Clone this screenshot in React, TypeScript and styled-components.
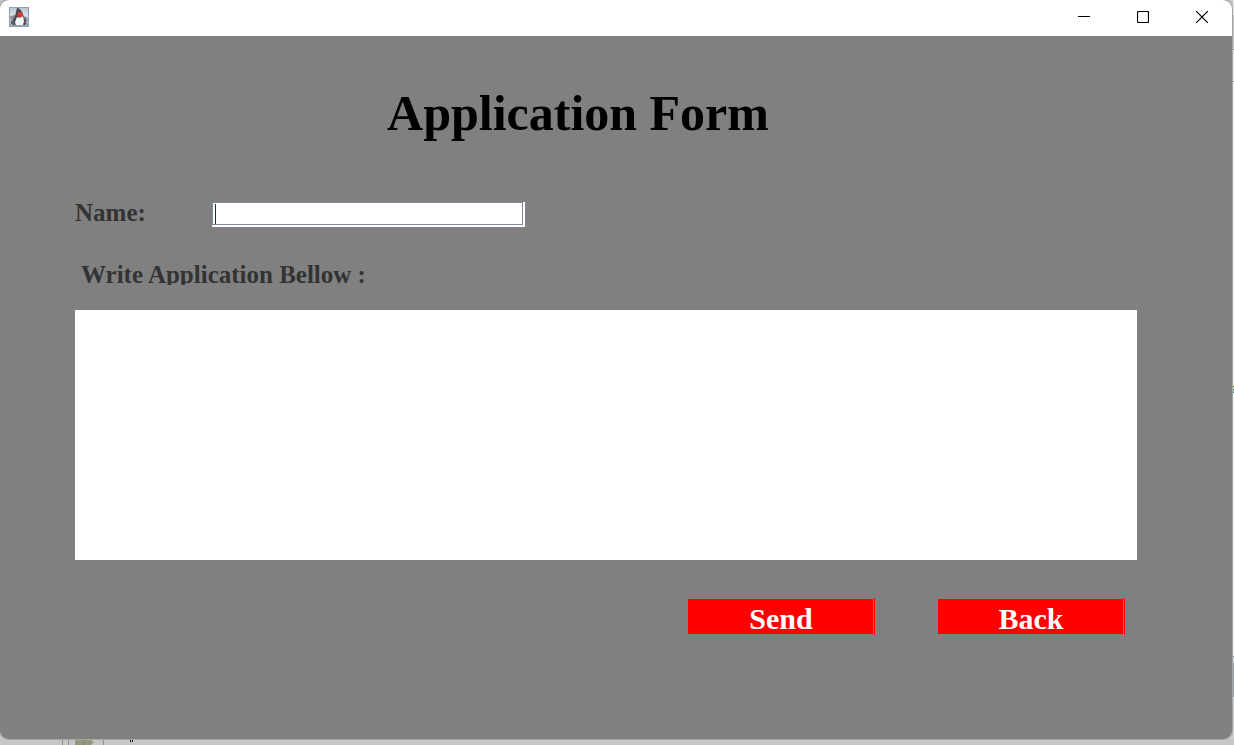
import React from "react";
import styled, { createGlobalStyle } from "styled-components";

const GlobalStyle = createGlobalStyle`
  * { box-sizing: border-box; }
  body { margin: 0; background: #c6c6c6; font-family: "Liberation Serif", "Times New Roman", serif; }
`;

const Desktop = styled.div`
  display: grid;
  grid-template-columns: minmax(0, 1fr) 2px;
  grid-template-rows: 1fr 6px;
  min-height: 100vh;
  background: #c6c6c6;
`;

const Window = styled.main`
  display: flex;
  flex-direction: column;
  background: #808080;
  border-radius: 9px;
  box-shadow: 0 0 0 1px #a6a6a6;
  overflow: hidden;
`;

const TitleBar = styled.header`
  display: flex;
  align-items: center;
  justify-content: space-between;
  height: 36px;
  padding: 0 1px 0 9px;
  background: #ffffff;
`;

const AppIcon = styled.svg`
  display: block;
  margin-bottom: 2px;
`;

const WindowControls = styled.div`
  display: flex;
  height: 36px;
`;

const ControlButton = styled.button`
  display: flex;
  align-items: center;
  justify-content: center;
  width: 59px;
  padding: 0 0 2px;
  border: 0;
  background: transparent;
`;

const Form = styled.form`
  display: flex;
  flex-direction: column;
  padding: 48px 95px 60px 75px;
`;

const Title = styled.h1`
  margin: 0 56px 0 0;
  font-size: 50px;
  line-height: 58px;
  font-weight: 700;
  color: #000000;
  text-align: center;
`;

const NameRow = styled.div`
  display: flex;
  align-items: center;
  height: 30px;
  margin-top: 56px;
`;

const Label = styled.label`
  flex: none;
  font-size: 25px;
  line-height: 30px;
  font-weight: 700;
  color: #333333;
`;

const NameLabel = styled(Label)`
  width: 137px;
`;

const ClippedLabel = styled(Label)`
  height: 25px;
  margin-top: 32px;
  padding-left: 6px;
  overflow: hidden;
`;

const NameField = styled.div`
  position: relative;
  display: flex;
  width: 313px;
  height: 25px;
  margin-top: 3px;
  padding: 0 2px 2px 0;
  background: #ffffff;
`;

const NameInput = styled.input`
  width: 100%;
  padding: 0 2px;
  border: 1px solid #7a8a99;
  border-radius: 0;
  outline: none;
  background: #ffffff;
  font: 16px "Liberation Serif", serif;
`;

const Caret = styled.span`
  position: absolute;
  top: 2px;
  left: 3px;
  width: 1px;
  height: 20px;
  background: #1e2a2f;
`;

const ApplicationText = styled.textarea`
  display: block;
  width: 100%;
  height: 250px;
  margin-top: 25px;
  padding: 2px;
  border: 0;
  border-radius: 0;
  outline: none;
  resize: none;
  background: #ffffff;
  font: 16px "Liberation Serif", serif;
`;

const Actions = styled.div`
  display: flex;
  justify-content: flex-end;
  gap: 63px;
  margin: 38px 12px 0 0;
`;

const ActionButton = styled.button`
  display: flex;
  width: 187px;
  height: 37px;
  padding: 1px 1px 1px 0;
  border: 0;
  border-right: 1px solid #ff0000;
  background: #808080;
  color: #ffffff;
  font: 700 30px "Liberation Serif", "Times New Roman", serif;
`;

const ActionFace = styled.span`
  flex: 1;
  height: 35px;
  padding-left: 1px;
  line-height: 40px;
  background: #ff0000;
`;

const SideSliver = styled.div`
  display: flex;
  flex-direction: column;
  align-items: flex-end;
`;

const Strip = styled.i<{ $h?: number; $color: string }>`
  flex: ${(p) => (p.$h ? "none" : "1")};
  width: 1px;
  height: ${(p) => (p.$h ? p.$h + "px" : "auto")};
  background: ${(p) => p.$color};
`;

const BottomSliver = styled.div`
  grid-column: 1 / -1;
  padding-top: 1px;
`;

const Sliver = styled.svg`
  display: block;
`;

const sideStrips: { h?: number; color: string }[] = [
  { h: 15, color: "#e6e6e6" },
  { h: 34, color: "#c6c6c6" },
  { h: 1, color: "#a0a0a0" },
  { h: 31, color: "#e6e6e6" },
  { h: 1, color: "#a0a0a0" },
  { h: 304, color: "#eeeeee" },
  { h: 1, color: "#2f7d32" },
  { h: 2, color: "#d9e2d6" },
  { h: 1, color: "#2f7d32" },
  { h: 2, color: "#8fc9c4" },
  { h: 1, color: "#2f7d32" },
  { h: 263, color: "#eeeeee" },
  { h: 1, color: "#8c8c8c" },
  { h: 6, color: "#d6d6d6" },
  { h: 34, color: "#929aa3" },
  { color: "#d0d0d0" },
];

export default function App() {
  return (
    <>
      <GlobalStyle />
      <Desktop>
        <Window>
          <TitleBar>
            <AppIcon width="20" height="20" viewBox="0 0 20 20" aria-hidden="true">
              <defs>
                <linearGradient id="tile" x1="0" y1="0" x2="0" y2="1">
                  <stop offset="0" stopColor="#b4c6da" />
                  <stop offset="0.5" stopColor="#e2e7ec" />
                  <stop offset="1" stopColor="#8d9cb0" />
                </linearGradient>
              </defs>
              <rect x="0.5" y="0.5" width="19" height="19" fill="url(#tile)" stroke="#8fa0b5" />
              <path d="M1 9l5-1 1 5-5 1zM14 9l4 1 1 4-4 1z" fill="#8b9197" />
              <path d="M8 1c2 0 4 2 5 4l2 5 2 4-1 4H5l-2-1 1-4 2-4z" fill="#46494e" />
              <path d="M2 14l4 1 1 3-5-1zM15 14l3 2-2 2z" fill="#5a5d62" />
              <path d="M8 10c1 1 4 1 6-1l1 5-1 4H7l-1-3z" fill="#f8f8f8" />
              <circle cx="11" cy="7.5" r="2.6" fill="#e03430" />
            </AppIcon>
            <WindowControls>
              <ControlButton type="button" aria-label="Minimize">
                <svg width="12" height="12" viewBox="0 0 12 12">
                  <path d="M0 5.5H12" stroke="#000" />
                </svg>
              </ControlButton>
              <ControlButton type="button" aria-label="Maximize">
                <svg width="12" height="12" viewBox="0 0 12 12">
                  <rect x="0.5" y="0.5" width="11" height="11" rx="1" fill="none" stroke="#000" strokeWidth="1.2" />
                </svg>
              </ControlButton>
              <ControlButton type="button" aria-label="Close">
                <svg width="12" height="12" viewBox="0 0 12 12">
                  <path d="M0 0L12 12M12 0L0 12" stroke="#000" strokeWidth="1.2" />
                </svg>
              </ControlButton>
            </WindowControls>
          </TitleBar>
          <Form onSubmit={(e) => e.preventDefault()}>
            <Title>Application Form</Title>
            <NameRow>
              <NameLabel htmlFor="name">Name:</NameLabel>
              <NameField>
                <NameInput id="name" type="text" />
                <Caret />
              </NameField>
            </NameRow>
            <ClippedLabel htmlFor="application">Write Application Bellow :</ClippedLabel>
            <ApplicationText id="application" />
            <Actions>
              <ActionButton type="submit">
                <ActionFace>Send</ActionFace>
              </ActionButton>
              <ActionButton type="button">
                <ActionFace>Back</ActionFace>
              </ActionButton>
            </Actions>
          </Form>
        </Window>
        <SideSliver aria-hidden="true">
          {sideStrips.map((s, i) => (
            <Strip key={i} $h={s.h} $color={s.color} />
          ))}
        </SideSliver>
        <BottomSliver aria-hidden="true">
          <Sliver width="140" height="5" viewBox="0 0 140 5">
            <path d="M62.5 0V5M68.5 0V5M103.5 0V5" stroke="#929292" />
            <path d="M75 0H91L94 2L91 5H75Z" fill="#96987d" />
            <path d="M83.5 0V5" stroke="#7f816a" />
            <path d="M130.5 0V2M132.5 0V2" stroke="#111" />
          </Sliver>
        </BottomSliver>
      </Desktop>
    </>
  );
}
